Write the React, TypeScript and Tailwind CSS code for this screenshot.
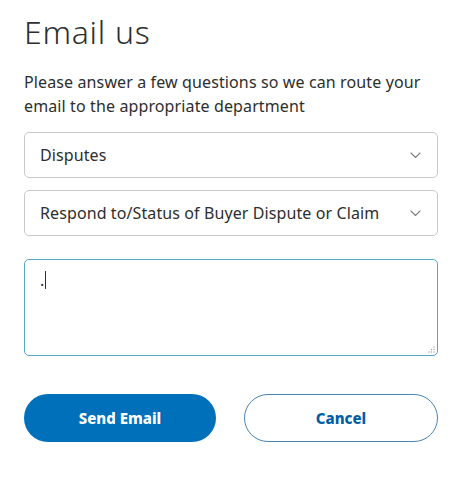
import React from 'react'

function Chevron() {
  return (
    <svg width="11" height="7" viewBox="0 0 11 7" fill="none" className="shrink-0">
      <path d="M1 1l4.5 4.5L10 1" stroke="#7b8087" strokeWidth="1.1" strokeLinecap="round" strokeLinejoin="round" />
    </svg>
  )
}

function SelectBox({ label }: { label: string }) {
  return (
    <div className="flex h-[46px] items-center justify-between rounded-[5px] border border-[#c7c9cc] pl-[15px] pr-[16px] text-[16px] tracking-[0.1px] text-[#2c2e2f]">
      <span>{label}</span>
      <Chevron />
    </div>
  )
}

export default function App() {
  return (
    <div className="min-h-[480px] bg-white px-6 pt-[12px] font-['Noto_Sans',sans-serif] text-[#2c2e2f]">
      <h1 className="text-[32px] font-light leading-[40px] tracking-[0.7px]">Email us</h1>

      <p className="mt-[18px] text-[16px] leading-[24px] tracking-[0.12px] text-[#2c2e2f]">
        Please answer a few questions so we can route your email to the appropriate department
      </p>

      <div className="mt-[14px] flex w-[414px] flex-col gap-[12px]">
        <SelectBox label="Disputes" />
        <SelectBox label="Respond to/Status of Buyer Dispute or Claim" />
      </div>

      {/* Message box */}
      <div className="relative mt-[23px] h-[97px] w-[414px] rounded-[5px] border border-[#5aa3c9] px-[15px] pt-[8px]">
        <div className="flex items-end text-[16px] leading-[24px]">
          <span>.</span>
          <span className="mb-[3px] ml-[1px] inline-block h-[18px] w-[1px] bg-[#2c2e2f]" />
        </div>
        <svg width="7" height="7" viewBox="0 0 7 7" className="absolute bottom-[2px] right-[2px]">
          <circle cx="6" cy="1" r="0.7" fill="#9ca3af" />
          <circle cx="6" cy="3.5" r="0.7" fill="#9ca3af" />
          <circle cx="3.5" cy="3.5" r="0.7" fill="#9ca3af" />
          <circle cx="6" cy="6" r="0.7" fill="#9ca3af" />
          <circle cx="3.5" cy="6" r="0.7" fill="#9ca3af" />
          <circle cx="1" cy="6" r="0.7" fill="#9ca3af" />
        </svg>
      </div>

      <div className="mt-[38px] flex w-[414px] gap-[28px]">
        <button className="h-[48px] flex-1 rounded-full bg-[#0070ba] text-[15px] font-extrabold text-white">
          Send Email
        </button>
        <button className="h-[48px] flex-1 rounded-full border border-[#4a84b4] bg-white text-[15px] font-extrabold text-[#005ea6]">
          Cancel
        </button>
      </div>
    </div>
  )
}
